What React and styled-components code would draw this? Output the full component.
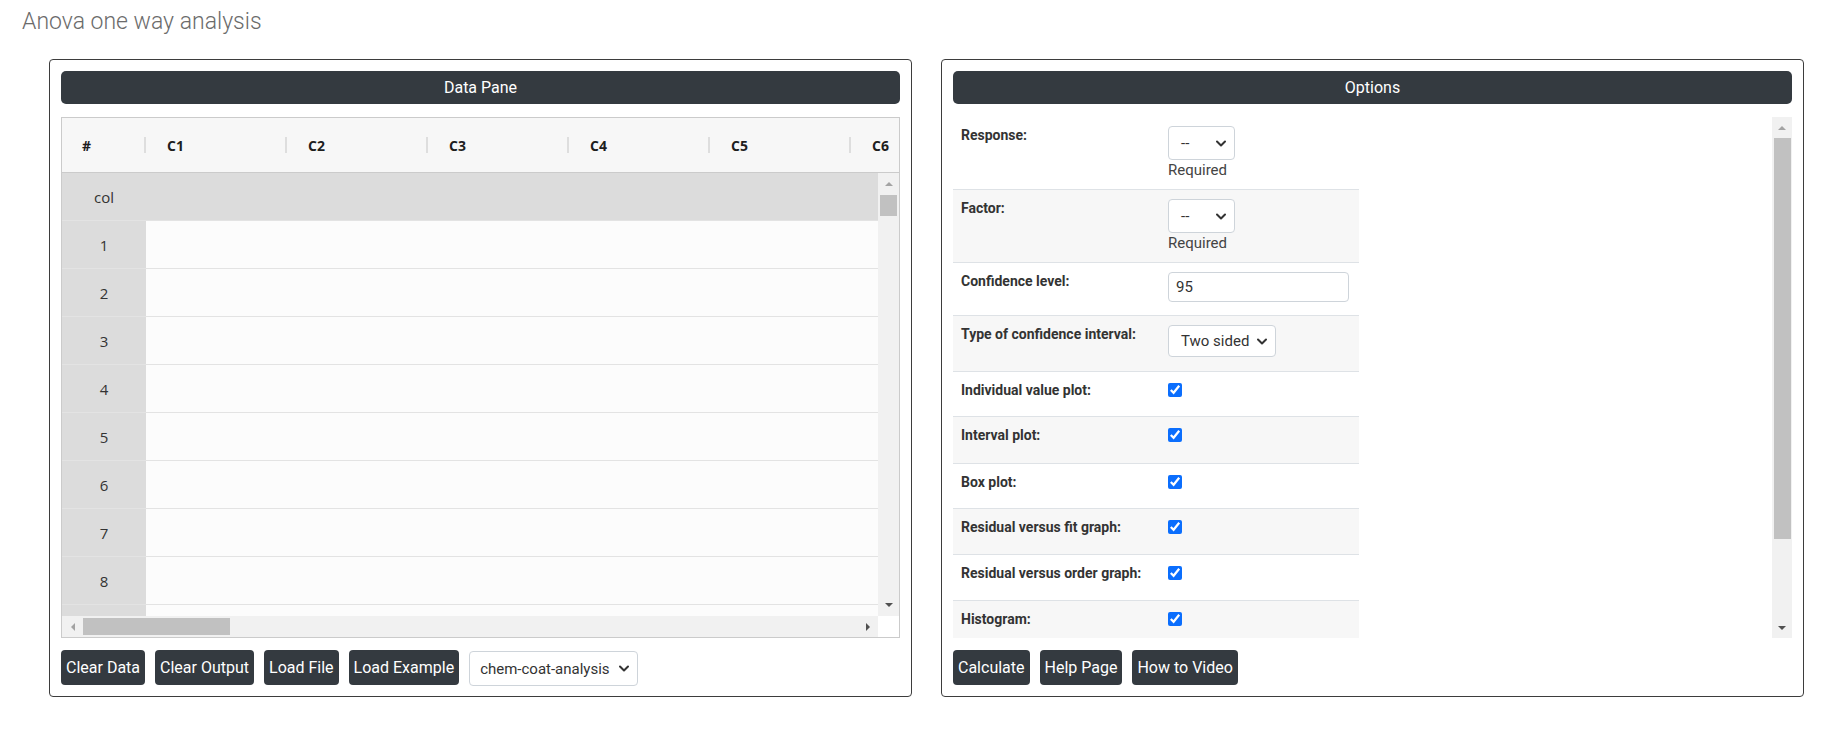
import styled, { createGlobalStyle } from 'styled-components';

const GlobalStyle = createGlobalStyle`
  * { box-sizing: border-box; }
  body {
    margin: 0;
    background: #fff;
    font-family: Roboto, "Liberation Sans", sans-serif;
    color: #212529;
  }
`;

const columns = ['C1', 'C2', 'C3', 'C4', 'C5', 'C6'];
// the ninth row sits under the horizontal scrollbar, only its top edge shows
const rowNumbers = [1, 2, 3, 4, 5, 6, 7, 8, ''];

const options = [
  { label: 'Response:', kind: 'select', h: 72 },
  { label: 'Factor:', kind: 'select', h: 73 },
  { label: 'Confidence level:', kind: 'input', h: 53 },
  { label: 'Type of confidence interval:', kind: 'interval', h: 56 },
  { label: 'Individual value plot:', kind: 'check', h: 45 },
  { label: 'Interval plot:', kind: 'check', h: 47 },
  { label: 'Box plot:', kind: 'check', h: 45 },
  { label: 'Residual versus fit graph:', kind: 'check', h: 46 },
  { label: 'Residual versus order graph:', kind: 'check', h: 46 },
  { label: 'Histogram:', kind: 'check', h: 46 },
];

function Arrow({ dir, dark }) {
  const vertical = dir === 'up' || dir === 'down';
  const points = {
    up: '0,5 4,1 8,5',
    down: '0,1 8,1 4,5',
    left: '5,0 1,4 5,8',
    right: '1,0 5,4 1,8',
  }[dir];
  return (
    <svg width={vertical ? 8 : 6} height={vertical ? 6 : 8} viewBox={vertical ? '0 0 8 6' : '0 0 6 8'}>
      <polygon points={points} fill={dark ? '#505050' : '#a3a3a3'} />
    </svg>
  );
}

function Chevron() {
  return (
    <svg width="10" height="7" viewBox="0 0 10 7">
      <path d="M1 1.5l4 4 4-4" fill="none" stroke="#333" strokeWidth="2" strokeLinecap="round" strokeLinejoin="round" />
    </svg>
  );
}

function Dropdown({ value, w, h = 34, pl = 12 }) {
  return (
    <SelectBox $w={w} $h={h} $pl={pl}>
      <span>{value}</span>
      <Chevron />
    </SelectBox>
  );
}

function OptionValue({ kind }) {
  if (kind === 'select') {
    return (
      <>
        <Dropdown value="--" w={67} />
        <Hint>Required</Hint>
      </>
    );
  }
  if (kind === 'input') return <NumInput defaultValue="95" />;
  if (kind === 'interval') return <Dropdown value="Two sided" w={108} h={32} />;
  return <Check defaultChecked />;
}

export default function App() {
  return (
    <Page>
      <GlobalStyle />
      <Title>Anova one way analysis</Title>

      <Panels>
        <Panel>
          <PaneTitle>Data Pane</PaneTitle>

          <Grid>
            <GridHead>
              <HeadCell $w={82} $pad={20}>#</HeadCell>
              {columns.map((c) => (
                <HeadCell key={c} $w={141}>
                  <HeadDivider />
                  {c}
                </HeadCell>
              ))}
            </GridHead>

            <GridBody>
              <GridRows>
                <GridRow $label>
                  <RowNum>col</RowNum>
                </GridRow>
                {rowNumbers.map((n, i) => (
                  <GridRow key={i}>
                    <RowNum>{n}</RowNum>
                  </GridRow>
                ))}
              </GridRows>
              <VScroll $w={21}>
                <ScrollBtn $size={22}><Arrow dir="up" /></ScrollBtn>
                <Thumb $w={17} $len={21} />
                <Spacer />
                <ScrollBtn $size={22}><Arrow dir="down" dark /></ScrollBtn>
              </VScroll>
            </GridBody>

            <HScrollRow>
              <HScroll>
                <ScrollBtn $size={21} $across><Arrow dir="left" /></ScrollBtn>
                <Thumb $across $w={17} $len={147} />
                <Spacer />
                <ScrollBtn $size={21} $across><Arrow dir="right" dark /></ScrollBtn>
              </HScroll>
              <Corner />
            </HScrollRow>
          </Grid>

          <Toolbar>
            <Btn>Clear Data</Btn>
            <Btn>Clear Output</Btn>
            <Btn>Load File</Btn>
            <Btn>Load Example</Btn>
            <Dropdown value="chem-coat-analysis" w={169} h={35} pl={10} />
          </Toolbar>
        </Panel>

        <Panel>
          <PaneTitle>Options</PaneTitle>

          <OptScroll>
            <OptTable>
              {options.map((o, i) => (
                <OptRow key={o.label} $h={o.h} $shade={i % 2 === 1}>
                  <OptLabel>{o.label}</OptLabel>
                  <OptValue>
                    <OptionValue kind={o.kind} />
                  </OptValue>
                </OptRow>
              ))}
            </OptTable>
            <Spacer />
            <VScroll $w={20}>
              <ScrollBtn $size={21}><Arrow dir="up" /></ScrollBtn>
              <Thumb $w={17} $len={401} />
              <Spacer />
              <ScrollBtn $size={21}><Arrow dir="down" dark /></ScrollBtn>
            </VScroll>
          </OptScroll>

          <Toolbar>
            <Btn>Calculate</Btn>
            <Btn>Help Page</Btn>
            <Btn>How to Video</Btn>
          </Toolbar>
        </Panel>
      </Panels>
    </Page>
  );
}

const Page = styled.div`
  width: 1824px;
  padding-bottom: 40px;
`;

const Title = styled.h1`
  margin: 8px 0 0 22px;
  font-size: 23px;
  line-height: 28px;
  font-weight: 300;
  color: #6b6b6b;
`;

const Panels = styled.div`
  display: flex;
  gap: 29px;
  margin-top: 23px;
  padding: 0 20px 0 49px;
`;

const Panel = styled.section`
  flex: 1;
  min-width: 0;
  height: 638px;
  padding: 11px;
  border: 1px solid #3d3d3d;
  border-radius: 4px;
  display: flex;
  flex-direction: column;
`;

const PaneTitle = styled.div`
  flex-shrink: 0;
  height: 33px;
  margin-bottom: 13px;
  border-radius: 5px;
  background: #343a40;
  color: #fff;
  font-size: 16px;
  line-height: 33px;
  text-align: center;
`;

const Grid = styled.div`
  height: 521px;
  flex-shrink: 0;
  border: 1px solid #cbcbcb;
  display: flex;
  flex-direction: column;
  overflow: hidden;
  font-family: "Open Sans", "DejaVu Sans", sans-serif;
  color: #333;
`;

const GridHead = styled.div`
  flex-shrink: 0;
  height: 55px;
  display: flex;
  align-items: center;
  background: #f7f7f7;
  border-bottom: 1px solid #cbcbcb;
  overflow: hidden;
  white-space: nowrap;
`;

const HeadCell = styled.div`
  flex: 0 0 ${(p) => p.$w}px;
  display: flex;
  align-items: center;
  padding-left: ${(p) => p.$pad || 0}px;
  font-size: 14px;
  font-weight: 700;
  color: #1e1e1e;
`;

const HeadDivider = styled.span`
  width: 2px;
  height: 16px;
  margin-right: 21px;
  background: #dedede;
`;

const GridBody = styled.div`
  flex: 1;
  min-height: 0;
  display: flex;
`;

const GridRows = styled.div`
  flex: 1;
  overflow: hidden;
`;

const GridRow = styled.div`
  display: flex;
  height: 48px;
  border-bottom: 1px solid #e3e3e3;
  background: ${(p) => (p.$label ? '#dcdcdc' : '#fcfcfc')};
`;

const RowNum = styled.div`
  flex: 0 0 84px;
  display: flex;
  align-items: center;
  justify-content: center;
  background: #dcdcdc;
  font-size: 15px;
  color: #333;
`;

const VScroll = styled.div`
  flex: 0 0 ${(p) => p.$w}px;
  display: flex;
  flex-direction: column;
  align-items: center;
  background: #f1f1f1;
`;

const HScrollRow = styled.div`
  flex-shrink: 0;
  height: 21px;
  display: flex;
`;

const HScroll = styled.div`
  flex: 1;
  display: flex;
  align-items: center;
  background: #f1f1f1;
`;

const Corner = styled.div`
  flex: 0 0 21px;
  background: #fff;
`;

const ScrollBtn = styled.div`
  flex-shrink: 0;
  ${(p) => (p.$across ? `width: ${p.$size}px; height: 100%;` : `height: ${p.$size}px; width: 100%;`)}
  display: flex;
  align-items: center;
  justify-content: center;
`;

const Thumb = styled.div`
  flex-shrink: 0;
  background: #c1c1c1;
  ${(p) => (p.$across ? `width: ${p.$len}px; height: ${p.$w}px;` : `height: ${p.$len}px; width: ${p.$w}px;`)}
`;

const Spacer = styled.div`
  flex: 1;
`;

const Toolbar = styled.div`
  flex-shrink: 0;
  display: flex;
  gap: 10px;
  height: 35px;
  margin-top: 12px;
`;

const Btn = styled.button`
  height: 35px;
  padding: 0 5px;
  border: 0;
  border-radius: 4px;
  background: #343a40;
  color: #fff;
  font-family: Roboto, "Liberation Sans", sans-serif;
  font-size: 16px;
`;

const SelectBox = styled.div`
  flex-shrink: 0;
  display: flex;
  align-items: center;
  justify-content: space-between;
  width: ${(p) => p.$w}px;
  height: ${(p) => p.$h}px;
  margin-top: 1px;
  padding: 0 8px 0 ${(p) => p.$pl}px;
  border: 1px solid #ced4da;
  border-radius: 4px;
  background: #fff;
  font-size: 15px;
  color: #333;
  white-space: nowrap;
`;

const OptScroll = styled.div`
  height: 521px;
  flex-shrink: 0;
  display: flex;
`;

const OptTable = styled.div`
  width: 406px;
  overflow: hidden;
`;

const OptRow = styled.div`
  display: flex;
  height: ${(p) => p.$h}px;
  background: ${(p) => (p.$shade ? '#f7f7f7' : '#fff')};

  & + & {
    border-top: 1px solid #dee2e6;
  }
`;

const OptLabel = styled.div`
  flex: 0 0 207px;
  padding: 8px;
  font-size: 14px;
  line-height: 21px;
  font-weight: 700;
  color: #333;
  white-space: nowrap;
`;

const OptValue = styled.div`
  flex: 1;
  padding: 8px;
  display: flex;
  flex-direction: column;
  align-items: flex-start;
`;

const Hint = styled.span`
  font-size: 15px;
  line-height: 21px;
  color: #444;
`;

const NumInput = styled.input`
  width: 181px;
  height: 30px;
  margin: 1px 0 0;
  padding: 0 7px;
  border: 1px solid #ced4da;
  border-radius: 4px;
  font-family: Roboto, "Liberation Sans", sans-serif;
  font-size: 15px;
  color: #333;
`;

const Check = styled.input.attrs({ type: 'checkbox' })`
  width: 14px;
  height: 14px;
  margin: 3px 0 0;
  accent-color: #0b6efd;
`;
